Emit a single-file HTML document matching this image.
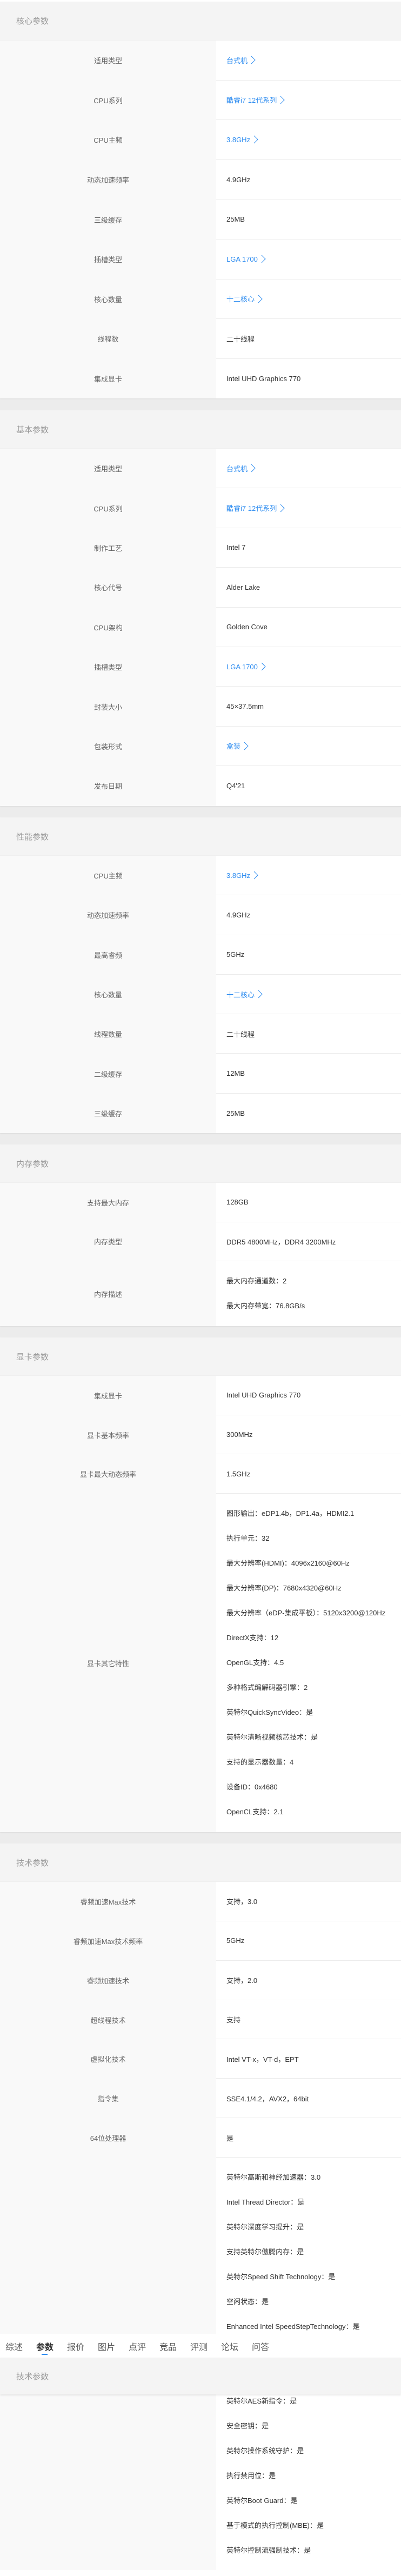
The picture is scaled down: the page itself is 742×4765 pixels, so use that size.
<!DOCTYPE html>
<html><head><meta charset="utf-8">
<style>
*{margin:0;padding:0;box-sizing:border-box}
html,body{width:742px;height:4765px;background:#ececec;overflow:hidden}
body{position:relative;font-family:"Liberation Sans","Noto Sans CJK SC",sans-serif;font-size:13px}
.top{position:absolute;left:0;top:0;width:742px;height:3px;background:#fff}
.sec{position:absolute;left:0;width:742px;background:#fff;box-shadow:0 1px 2px rgba(0,0,0,.08)}
.hd{background:#f4f4f4;color:#999;font-size:15px;padding-left:30px;display:flex;align-items:center;border-bottom:1px solid #efefef}
.row{display:flex}
.lb{width:400px;background:#f9f9f9;color:#666;display:flex;align-items:center;justify-content:center}
.vl{flex:1;border-bottom:1px solid #ececec;padding-left:19px;color:#333;display:flex;align-items:center}
.row:last-child .vl{border-bottom:none}
.ml{display:block;padding-top:14px;line-height:46px}
.a{color:#2d8cf0;display:flex;align-items:center}
.a svg{margin-left:6px}
.tabs{position:absolute;left:0;top:4317px;width:742px;height:44px;background:#fff}
.tabs span{position:absolute;top:11px;font-size:16px;color:#555}
.tabs .on{color:#333;font-weight:bold}
.tabs i{position:absolute;left:77px;top:37px;width:11px;height:2px;background:#2d8cf0}
.sh{position:absolute;left:0;top:4361px;width:742px;height:68px;background:#f4f4f4;color:#999;font-size:15px;padding-left:30px;display:flex;align-items:center;box-shadow:0 2px 3px rgba(0,0,0,.08)}
.white{position:absolute;left:0;top:4754px;width:742px;height:11px;background:#fff}
</style></head><body>
<div class="top"></div>

<!-- S1 -->
<div class="sec" style="top:3px">
<div class="hd" style="height:72px">核心参数</div>
<div class="row" style="height:73.6px"><div class="lb">适用类型</div><div class="vl"><span class="a">台式机<svg width="9" height="16" viewBox="0 0 9 16"><path d="M1 1l7 7-7 7" fill="none" stroke="#2d8cf0" stroke-width="1"/></svg></span></div></div>
<div class="row" style="height:73.6px"><div class="lb">CPU系列</div><div class="vl"><span class="a">酷睿i7 12代系列<svg width="9" height="16" viewBox="0 0 9 16"><path d="M1 1l7 7-7 7" fill="none" stroke="#2d8cf0" stroke-width="1"/></svg></span></div></div>
<div class="row" style="height:73.6px"><div class="lb">CPU主频</div><div class="vl"><span class="a">3.8GHz<svg width="9" height="16" viewBox="0 0 9 16"><path d="M1 1l7 7-7 7" fill="none" stroke="#2d8cf0" stroke-width="1"/></svg></span></div></div>
<div class="row" style="height:73.6px"><div class="lb">动态加速频率</div><div class="vl">4.9GHz</div></div>
<div class="row" style="height:73.6px"><div class="lb">三级缓存</div><div class="vl">25MB</div></div>
<div class="row" style="height:73.6px"><div class="lb">插槽类型</div><div class="vl"><span class="a">LGA 1700<svg width="9" height="16" viewBox="0 0 9 16"><path d="M1 1l7 7-7 7" fill="none" stroke="#2d8cf0" stroke-width="1"/></svg></span></div></div>
<div class="row" style="height:73.6px"><div class="lb">核心数量</div><div class="vl"><span class="a">十二核心<svg width="9" height="16" viewBox="0 0 9 16"><path d="M1 1l7 7-7 7" fill="none" stroke="#2d8cf0" stroke-width="1"/></svg></span></div></div>
<div class="row" style="height:73.6px"><div class="lb">线程数</div><div class="vl">二十线程</div></div>
<div class="row" style="height:73.6px"><div class="lb">集成显卡</div><div class="vl">Intel UHD Graphics 770</div></div>
</div>

<!-- S2 -->
<div class="sec" style="top:759px">
<div class="hd" style="height:71px">基本参数</div>
<div class="row" style="height:73.4px"><div class="lb">适用类型</div><div class="vl"><span class="a">台式机<svg width="9" height="16" viewBox="0 0 9 16"><path d="M1 1l7 7-7 7" fill="none" stroke="#2d8cf0" stroke-width="1"/></svg></span></div></div>
<div class="row" style="height:73.4px"><div class="lb">CPU系列</div><div class="vl"><span class="a">酷睿i7 12代系列<svg width="9" height="16" viewBox="0 0 9 16"><path d="M1 1l7 7-7 7" fill="none" stroke="#2d8cf0" stroke-width="1"/></svg></span></div></div>
<div class="row" style="height:73.4px"><div class="lb">制作工艺</div><div class="vl">Intel 7</div></div>
<div class="row" style="height:73.4px"><div class="lb">核心代号</div><div class="vl">Alder Lake</div></div>
<div class="row" style="height:73.4px"><div class="lb">CPU架构</div><div class="vl">Golden Cove</div></div>
<div class="row" style="height:73.4px"><div class="lb">插槽类型</div><div class="vl"><span class="a">LGA 1700<svg width="9" height="16" viewBox="0 0 9 16"><path d="M1 1l7 7-7 7" fill="none" stroke="#2d8cf0" stroke-width="1"/></svg></span></div></div>
<div class="row" style="height:73.4px"><div class="lb">封装大小</div><div class="vl">45×37.5mm</div></div>
<div class="row" style="height:73.4px"><div class="lb">包装形式</div><div class="vl"><span class="a">盒装<svg width="9" height="16" viewBox="0 0 9 16"><path d="M1 1l7 7-7 7" fill="none" stroke="#2d8cf0" stroke-width="1"/></svg></span></div></div>
<div class="row" style="height:73.4px"><div class="lb">发布日期</div><div class="vl">Q4'21</div></div>
</div>

<!-- S3 -->
<div class="sec" style="top:1512px">
<div class="hd" style="height:71px">性能参数</div>
<div class="row" style="height:73.3px"><div class="lb">CPU主频</div><div class="vl"><span class="a">3.8GHz<svg width="9" height="16" viewBox="0 0 9 16"><path d="M1 1l7 7-7 7" fill="none" stroke="#2d8cf0" stroke-width="1"/></svg></span></div></div>
<div class="row" style="height:73.3px"><div class="lb">动态加速频率</div><div class="vl">4.9GHz</div></div>
<div class="row" style="height:73.3px"><div class="lb">最高睿频</div><div class="vl">5GHz</div></div>
<div class="row" style="height:73.3px"><div class="lb">核心数量</div><div class="vl"><span class="a">十二核心<svg width="9" height="16" viewBox="0 0 9 16"><path d="M1 1l7 7-7 7" fill="none" stroke="#2d8cf0" stroke-width="1"/></svg></span></div></div>
<div class="row" style="height:73.3px"><div class="lb">线程数量</div><div class="vl">二十线程</div></div>
<div class="row" style="height:73.3px"><div class="lb">二级缓存</div><div class="vl">12MB</div></div>
<div class="row" style="height:73.3px"><div class="lb">三级缓存</div><div class="vl">25MB</div></div>
</div>

<!-- S4 -->
<div class="sec" style="top:2117px">
<div class="hd" style="height:71px">内存参数</div>
<div class="row" style="height:72.5px"><div class="lb">支持最大内存</div><div class="vl">128GB</div></div>
<div class="row" style="height:72.5px"><div class="lb">内存类型</div><div class="vl">DDR5 4800MHz，DDR4 3200MHz</div></div>
<div class="row" style="height:120px"><div class="lb">内存描述</div><div class="vl ml">最大内存通道数：2<br>最大内存带宽：76.8GB/s</div></div>
</div>

<!-- S5 -->
<div class="sec" style="top:2474px">
<div class="hd" style="height:71px">显卡参数</div>
<div class="row" style="height:72.7px"><div class="lb">集成显卡</div><div class="vl">Intel UHD Graphics 770</div></div>
<div class="row" style="height:72.7px"><div class="lb">显卡基本频率</div><div class="vl">300MHz</div></div>
<div class="row" style="height:72.7px"><div class="lb">显卡最大动态频率</div><div class="vl">1.5GHz</div></div>
<div class="row" style="height:626px"><div class="lb">显卡其它特性</div><div class="vl ml">图形输出：eDP1.4b，DP1.4a，HDMI2.1<br>执行单元：32<br>最大分辨率(HDMI)：4096x2160@60Hz<br>最大分辨率(DP)：7680x4320@60Hz<br>最大分辨率（eDP-集成平板）：5120x3200@120Hz<br>DirectX支持：12<br>OpenGL支持：4.5<br>多种格式编解码器引擎：2<br>英特尔QuickSyncVideo：是<br>英特尔清晰视频核芯技术：是<br>支持的显示器数量：4<br>设备ID：0x4680<br>OpenCL支持：2.1</div></div>
</div>

<!-- S6 -->
<div class="sec" style="top:3410px">
<div class="hd" style="height:71px">技术参数</div>
<div class="row" style="height:72.86px"><div class="lb">睿频加速Max技术</div><div class="vl">支持，3.0</div></div>
<div class="row" style="height:72.86px"><div class="lb">睿频加速Max技术频率</div><div class="vl">5GHz</div></div>
<div class="row" style="height:72.86px"><div class="lb">睿频加速技术</div><div class="vl">支持，2.0</div></div>
<div class="row" style="height:72.86px"><div class="lb">超线程技术</div><div class="vl">支持</div></div>
<div class="row" style="height:72.86px"><div class="lb">虚拟化技术</div><div class="vl">Intel VT-x，VT-d，EPT</div></div>
<div class="row" style="height:72.86px"><div class="lb">指令集</div><div class="vl">SSE4.1/4.2，AVX2，64bit</div></div>
<div class="row" style="height:72.86px"><div class="lb">64位处理器</div><div class="vl">是</div></div>
<div class="row" style="height:763px"><div class="lb">其他技术</div><div class="vl ml">英特尔高斯和神经加速器：3.0<br>Intel Thread Director：是<br>英特尔深度学习提升：是<br>支持英特尔傲腾内存：是<br>英特尔Speed Shift Technology：是<br>空闲状态：是<br>Enhanced Intel SpeedStepTechnology：是<br>温度监控技术：是<br>英特尔身份保护技术：是<br>英特尔AES新指令：是<br>安全密钥：是<br>英特尔操作系统守护：是<br>执行禁用位：是<br>英特尔Boot Guard：是<br>基于模式的执行控制(MBE)：是<br>英特尔控制流强制技术：是</div></div>
</div>

<div class="white"></div>

<div class="tabs">
<span style="left:10px">综述</span>
<span class="on" style="left:67px">参数</span>
<span style="left:124px">报价</span>
<span style="left:181px">图片</span>
<span style="left:238px">点评</span>
<span style="left:295px">竞品</span>
<span style="left:352px">评测</span>
<span style="left:409px">论坛</span>
<span style="left:466px">问答</span>
<i></i>
</div>
<div class="sh">技术参数</div>
</body></html>
